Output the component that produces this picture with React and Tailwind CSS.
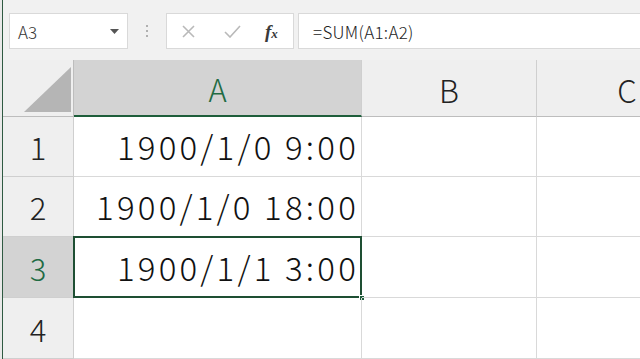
import React from "react";

const font = { fontFamily: '"Noto Sans CJK JP", "Noto Sans", sans-serif' };

function TopBar() {
  return (
    <div className="flex h-[60px] items-start bg-[#f1f1f1] pt-[13px]">
      <div className="ml-[6px] flex h-[36px] w-[119px] items-center justify-between border border-[#d9d9d9] bg-white pl-[8px] pr-[8px]">
        <span className="text-[17px] font-light leading-none text-[#333]">A3</span>
        <svg width="9" height="5" viewBox="0 0 9 5"><path d="M0 0h9L4.5 5z" fill="#555" /></svg>
      </div>
      <div className="flex h-[36px] w-[38px] flex-col items-center justify-center gap-[3px]">
        <span className="block h-[2px] w-[2px] rounded-full bg-[#9a9a9a]" />
        <span className="block h-[2px] w-[2px] rounded-full bg-[#9a9a9a]" />
        <span className="block h-[2px] w-[2px] rounded-full bg-[#9a9a9a]" />
      </div>
      <div className="flex h-[36px] w-[128px] items-center border border-[#d9d9d9] bg-white">
        <svg className="ml-[15px]" width="13" height="13" viewBox="0 0 13 13"><path d="M1 1l11 11M12 1L1 12" stroke="#b9b9b9" strokeWidth="1.6" /></svg>
        <svg className="ml-[29px]" width="17" height="13" viewBox="0 0 17 13"><path d="M1 7l5 5L16 1" stroke="#b9b9b9" strokeWidth="1.6" fill="none" /></svg>
        <span className="ml-[24px] text-[19px] font-semibold italic leading-none text-[#3a3a3a]" style={{ fontFamily: '"Liberation Serif", serif' }}>f<span className="text-[13px]">x</span></span>
      </div>
      <div className="ml-[4px] flex h-[36px] flex-1 items-center border-y border-l border-[#d9d9d9] bg-white pl-[14px]">
        <span className="text-[17px] font-light leading-none tracking-[0.3px] text-[#222]">=SUM(A1:A2)</span>
      </div>
    </div>
  );
}

function ColHeader({ label, selected, last }) {
  return (
    <div
      className={
        "flex items-center justify-center text-[31px] font-light leading-none " +
        (selected
          ? "border-b-2 border-b-[#1e5e3b] bg-[#d3d3d3] text-[#1f6b43] "
          : "border-b border-b-[#bdbdbd] bg-[#efefef] text-[#222] ") +
        (last ? "" : "border-r border-r-[#cfcfcf]")
      }
    >
      <span className="translate-y-[1px]">{label}</span>
    </div>
  );
}

function RowHeader({ n, selected }) {
  return (
    <div
      className={
        "flex items-center justify-center border-b border-r border-[#cfcfcf] text-[31px] font-light leading-none " +
        (selected ? "bg-[#d3d3d3] text-[#1f6b43]" : "bg-[#efefef] text-[#222]")
      }
    >
      {n}
    </div>
  );
}

function Cell({ children, selected, last }) {
  return (
    <div
      className={
        "relative flex items-center justify-end border-b border-[#d9d9d9] pr-[2px] text-[33px] font-light leading-none text-[#111] " +
        (last ? "" : "border-r")
      }
    >
      <span className="tracking-[3.2px]">{children}</span>
      {selected && (
        <>
          <div className="pointer-events-none absolute -left-[1px] -top-[1px] bottom-[-1px] right-[-1px] border-2 border-[#1e4f33]" />
          <div className="absolute -bottom-[4px] -right-[4px] h-[6px] w-[6px] border border-white bg-[#1e5e3b]" />
        </>
      )}
    </div>
  );
}

export default function App() {
  const rows = [
    { n: 1, v: "1900/1/0 9:00" },
    { n: 2, v: "1900/1/0 18:00" },
    { n: 3, v: "1900/1/1 3:00", sel: true },
    { n: 4, v: "" },
  ];
  return (
    <div className="flex h-[359px] w-[640px] overflow-hidden bg-[#f1f1f1]" style={font}>
      <div className="w-[2px] shrink-0 bg-[#e9e9e9]" />
      <div className="w-[1px] shrink-0 bg-[#2f5a42]" />
      <div className="flex min-w-0 flex-1 flex-col">
        <TopBar />
        <div className="grid flex-1 grid-cols-[71px_288px_175px_180px] grid-rows-[57px_60px_60px_61px_1fr] bg-white">
          <div className="relative border-b border-r border-[#bdbdbd] bg-[#efefef]">
            <svg className="absolute bottom-[4px] right-[2px]" width="47" height="45" viewBox="0 0 47 45"><path d="M47 0V45H0z" fill="#b5b5b5" /></svg>
          </div>
          <ColHeader label="A" selected />
          <ColHeader label="B" />
          <ColHeader label="C" last />
          {rows.map((r) => (
            <React.Fragment key={r.n}>
              <RowHeader n={r.n} selected={r.sel} />
              <Cell selected={r.sel}>{r.v}</Cell>
              <Cell />
              <Cell last />
            </React.Fragment>
          ))}
        </div>
      </div>
    </div>
  );
}
